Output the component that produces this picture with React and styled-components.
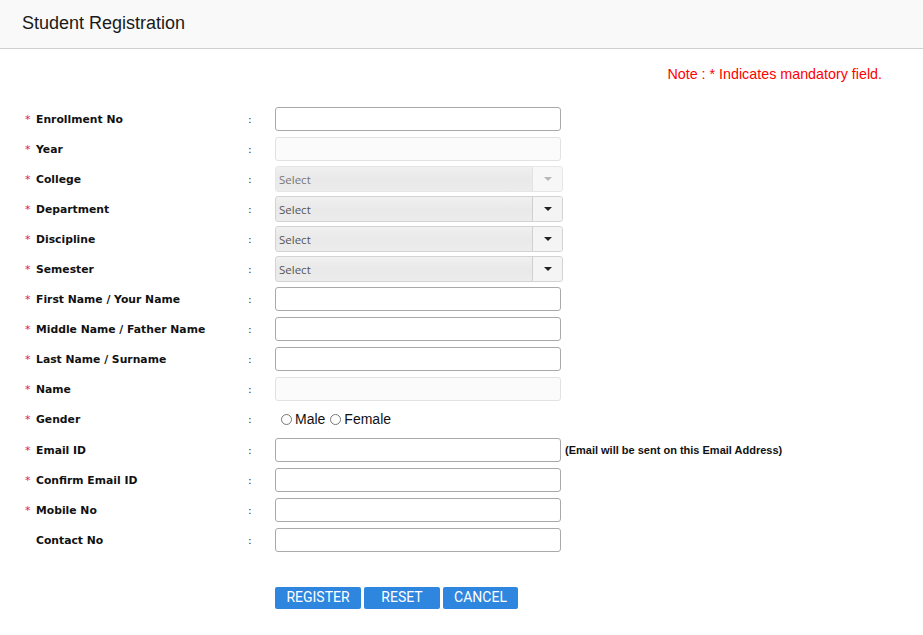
import React from 'react'
import styled, { createGlobalStyle } from 'styled-components'

const Global = createGlobalStyle`
  body {
    margin: 0;
    background: #fff;
    font-family: "Liberation Sans", Arial, sans-serif;
    color: #000;
  }
`

const Header = styled.div`
  background: #f9f9f9;
  border-bottom: 1px solid #d0d0d0;
  display: flex;
  align-items: center;
  padding-left: 22px;
  box-sizing: border-box;
  height: 49px;
`

const Title = styled.h1`
  margin: 0;
  font-size: 18px;
  font-weight: normal;
  color: #1a1a1a;
  margin-top: -2px;
`

const Note = styled.div`
  display: flex;
  justify-content: flex-end;
  padding-right: 41px;
  margin-top: 17px;
  font-size: 14.3px;
  color: #ff0000;
  height: 16px;
`

const Form = styled.div`
  margin-top: 22px;
  padding-left: 25px;
  display: flex;
  flex-direction: column;
`

const Row = styled.div`
  display: flex;
  align-items: center;
  height: ${p => p.$h || 30}px;
`

const Label = styled.div`
  width: 223px;
  font-family: "DejaVu Sans", Verdana, sans-serif;
  font-size: 10.8px;
  font-weight: bold;
  color: #111;
  display: flex;
  align-items: center;
`

const Star = styled.span`
  color: #e8173a;
  font-weight: normal;
  width: 11px;
  font-size: 11px;
  visibility: ${p => (p.$hidden ? 'hidden' : 'visible')};
`

const Colon = styled.div`
  width: 27px;
  font-family: "DejaVu Sans", Verdana, sans-serif;
  font-size: 11px;
  color: #333;
`

const Input = styled.input`
  width: 286px;
  height: 24px;
  box-sizing: border-box;
  border: 1px solid ${p => (p.disabled ? '#e2e2e2' : '#a9a9a9')};
  background: ${p => (p.disabled ? '#fbfbfb' : '#fff')};
  border-radius: 3px;
  margin: 0;
  padding: 2px 4px;
  outline: none;
`

const SelectBox = styled.div`
  width: 288px;
  height: 26px;
  box-sizing: border-box;
  display: flex;
  border: 1px solid ${p => (p.$disabled ? '#e6e6e6' : '#d3d3d3')};
  border-radius: 3px;
  overflow: hidden;
  background: linear-gradient(#f0f0f0, #e9e9e9 50%, #ececec);
`

const SelectText = styled.div`
  flex: 1;
  display: flex;
  align-items: center;
  padding-left: 3px;
  font-family: "Open Sans", "DejaVu Sans", sans-serif;
  font-size: 11.5px;
  color: ${p => (p.$disabled ? '#777' : '#555')};
  border-right: 1px solid ${p => (p.$disabled ? '#e2e2e2' : '#d0d0d0')};
`

const Arrow = styled.div`
  width: 29px;
  display: flex;
  align-items: center;
  justify-content: center;
  background: ${p => (p.$disabled ? '#f7f7f7' : '#f4f4f4')};
  &::after {
    content: '';
    border-left: 4px solid transparent;
    border-right: 4px solid transparent;
    border-top: 4px solid ${p => (p.$disabled ? '#b8b8b8' : '#222')};
  }
`

const Radios = styled.div`
  display: flex;
  align-items: center;
  padding-left: 5px;
  margin-bottom: 2px;
  font-size: 14px;
  color: #111;
`

const RadioLabel = styled.label`
  display: flex;
  align-items: center;
  margin-right: 4px;
`

const Radio = styled.input`
  width: 11px;
  height: 11px;
  margin: 1px 3px 0 1px;
`

const Hint = styled.span`
  margin-left: 4px;
  font-size: 11px;
  font-weight: bold;
  color: #111;
`

const Buttons = styled.div`
  display: flex;
  gap: 3px;
  margin-top: 32px;
  padding-left: 275px;
`

const Button = styled.button`
  width: ${p => p.$w}px;
  height: 22px;
  border: none;
  border-radius: 2px;
  background: #2e86de;
  color: #fff;
  font-family: Roboto, "Liberation Sans", sans-serif;
  font-size: 14px;
  padding: 0;
  padding-bottom: 2px;
  cursor: pointer;
`

const rows = [
  { label: 'Enrollment No', type: 'input' },
  { label: 'Year', type: 'input', disabled: true },
  { label: 'College', type: 'select', disabled: true },
  { label: 'Department', type: 'select' },
  { label: 'Discipline', type: 'select' },
  { label: 'Semester', type: 'select' },
  { label: 'First Name / Your Name', type: 'input' },
  { label: 'Middle Name / Father Name', type: 'input' },
  { label: 'Last Name / Surname', type: 'input' },
  { label: 'Name', type: 'input', disabled: true },
  { label: 'Gender', type: 'radio', h: 31 },
  { label: 'Email ID', type: 'input', hint: '(Email will be sent on this Email Address)' },
  { label: 'Confirm Email ID', type: 'input' },
  { label: 'Mobile No', type: 'input' },
  { label: 'Contact No', type: 'input', optional: true }
]

const Field = ({ row }) => {
  if (row.type === 'select') {
    return (
      <SelectBox $disabled={row.disabled}>
        <SelectText $disabled={row.disabled}>Select</SelectText>
        <Arrow $disabled={row.disabled} />
      </SelectBox>
    )
  }
  if (row.type === 'radio') {
    return (
      <Radios>
        <RadioLabel><Radio type="radio" name="gender" />Male</RadioLabel>
        <RadioLabel><Radio type="radio" name="gender" />Female</RadioLabel>
      </Radios>
    )
  }
  return (
    <>
      <Input type="text" disabled={row.disabled} />
      {row.hint && <Hint>{row.hint}</Hint>}
    </>
  )
}

export default function App() {
  return (
    <>
      <Global />
      <Header>
        <Title>Student Registration</Title>
      </Header>
      <Note>Note : * Indicates mandatory field.</Note>
      <Form>
        {rows.map(row => (
          <Row key={row.label} $h={row.h}>
            <Label>
              <Star $hidden={row.optional}>*</Star>
              {row.label}
            </Label>
            <Colon>:</Colon>
            <Field row={row} />
          </Row>
        ))}
      </Form>
      <Buttons>
        <Button $w={86}>REGISTER</Button>
        <Button $w={76}>RESET</Button>
        <Button $w={75}>CANCEL</Button>
      </Buttons>
    </>
  )
}
